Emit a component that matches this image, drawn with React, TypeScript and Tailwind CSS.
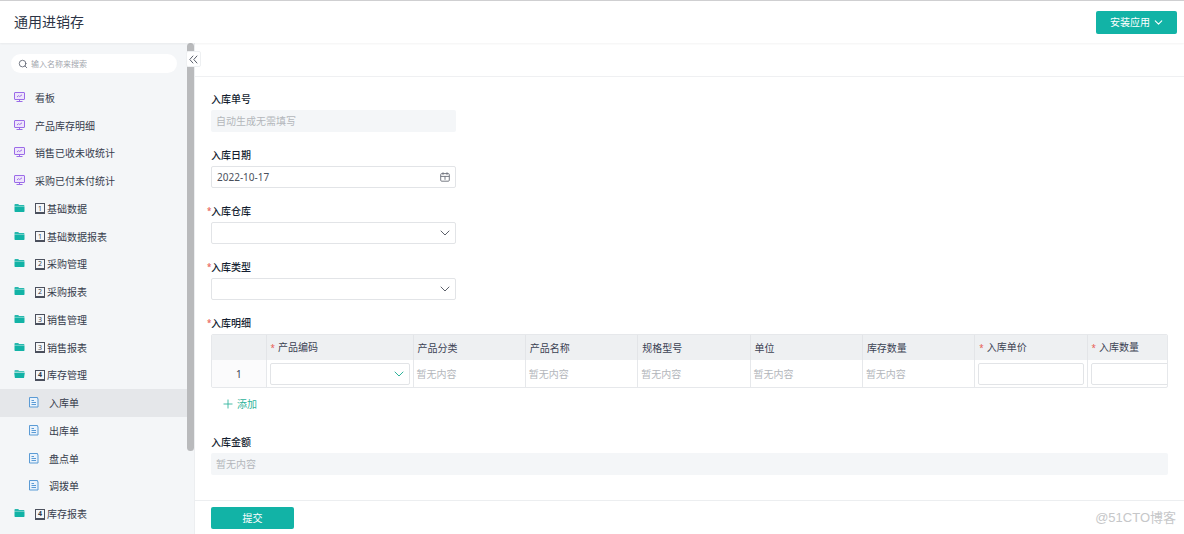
import { ChevronDown, Plus, Search } from "lucide-react";

type MenuItem = {
  label: string;
  kind: "board" | "folder" | "folderOpen" | "form";
  index?: number;
  active?: boolean;
};

const menu: MenuItem[] = [
  { label: "看板", kind: "board" },
  { label: "产品库存明细", kind: "board" },
  { label: "销售已收未收统计", kind: "board" },
  { label: "采购已付未付统计", kind: "board" },
  { label: "基础数据", kind: "folder", index: 1 },
  { label: "基础数据报表", kind: "folder", index: 1 },
  { label: "采购管理", kind: "folder", index: 2 },
  { label: "采购报表", kind: "folder", index: 2 },
  { label: "销售管理", kind: "folder", index: 3 },
  { label: "销售报表", kind: "folder", index: 3 },
  { label: "库存管理", kind: "folderOpen", index: 4 },
  { label: "入库单", kind: "form", active: true },
  { label: "出库单", kind: "form" },
  { label: "盘点单", kind: "form" },
  { label: "调拨单", kind: "form" },
  { label: "库存报表", kind: "folder", index: 4 },
];

const columns = [
  { title: "产品编码", required: true, type: "select" },
  { title: "产品分类", type: "text" },
  { title: "产品名称", type: "text" },
  { title: "规格型号", type: "text" },
  { title: "单位", type: "text" },
  { title: "库存数量", type: "text" },
  { title: "入库单价", required: true, type: "input" },
  { title: "入库数量", required: true, type: "input" },
];

function BoardIcon() {
  return (
    <svg width="11" height="11" viewBox="0 0 11 11" fill="none" stroke="#9b6be8">
      <rect x="0.5" y="0.5" width="10" height="7" rx="0.5" fill="#eee5fb" />
      <path d="M3 5l1.5-1.3 1.2.8L8 2.8" />
      <path d="M5.5 7.5v1.5M2.5 9.5h6" />
    </svg>
  );
}

function FolderIcon({ open }: { open?: boolean }) {
  return (
    <svg width="11" height="11" viewBox="0 0 11 11" fill="#12b3a6">
      <path d="M0.5 1.7q0-.7.7-.7h3l.9 1h4.6q.7 0 .7.7v.6H.5z" opacity={open ? 0.75 : 0.9} />
      <path d={open ? "M0.2 3.8h10.6l-.7 4.6q-.1.6-.7.6H1.5q-.6 0-.7-.6z" : "M0.5 3.6h10v4.7q0 .7-.7.7H1.2q-.7 0-.7-.7z"} />
    </svg>
  );
}

function FormIcon() {
  return (
    <svg width="10" height="11" viewBox="0 0 10 11" fill="none" stroke="#5b9bd5">
      <path d="M0.5 0.5h8v1h.5v8.5H.5z" fill="#eaf3fc" />
      <path d="M2.5 3.5h2.5M2.5 5.5h4.5M2.5 7.5h4.5" />
    </svg>
  );
}

function CalendarIcon() {
  return (
    <svg width="10" height="10" viewBox="0 0 10 10" fill="none" stroke="#686c76" strokeWidth="0.9">
      <rect x="0.7" y="1.6" width="8.6" height="7.6" rx="1" />
      <path d="M0.7 4.4h8.6M3 .3v2.5M7 .3v2.5M5 4.4v3.4" />
    </svg>
  );
}

function MenuIcon({ kind }: { kind: MenuItem["kind"] }) {
  if (kind === "board") return <BoardIcon />;
  if (kind === "form") return <FormIcon />;
  return <FolderIcon open={kind === "folderOpen"} />;
}

function Keycap({ value }: { value: number }) {
  return (
    <span
      className={`mr-0.5 flex h-[11px] w-[10px] items-center justify-center border border-b-2 border-[#4b505d] text-[7px] leading-none ${
        value === 4 ? "font-bold" : ""
      }`}
    >
      {value}
    </span>
  );
}

const labelClass = "relative mb-1 block leading-[14px] font-medium text-[#141e31]";

function Star() {
  return <span className="absolute -left-1 text-[8px] text-[#e8584f]">*</span>;
}

function Label({ id, text, required }: { id: string; text: string; required?: boolean }) {
  return (
    <label htmlFor={id} className={labelClass}>
      {required && <Star />}
      {text}
    </label>
  );
}

function SelectField({ id, text }: { id: string; text: string }) {
  return (
    <div>
      <Label id={id} text={text} required />
      <div className="relative w-[245px]">
        <select id={id} className="block h-[22px] w-full appearance-none rounded-xs border border-[#e2e4e7] bg-white px-1.5 outline-none" />
        <ChevronDown size={16} strokeWidth={1.5} className="pointer-events-none absolute top-[3px] right-[3px] text-[#5d616b]" />
      </div>
    </div>
  );
}

function Sidebar() {
  return (
    <aside className="relative flex w-[194px] shrink-0 bg-[#f4f6f8]">
      <div className="flex flex-1 flex-col pt-[11px] pb-1.5">
        <div className="mr-[10px] mb-[11px] ml-[11px] flex h-[19px] items-center gap-[3px] rounded-full bg-white px-[7px]">
          <Search size={10} className="shrink-0 text-[#5c6270]" />
          <input
            aria-label="输入名称来搜索"
            placeholder="输入名称来搜索"
            className="w-full bg-transparent text-[8px] leading-3 outline-none placeholder:text-[#a3a7ae]"
          />
        </div>
        <nav className="flex flex-1 flex-col">
          {menu.map((item) => (
            <a
              key={item.label}
              href="#"
              className={`flex min-h-6 flex-1 items-center gap-[10px] text-[#363c4c] ${
                item.active ? "bg-[#e5e7ea]" : ""
              } ${item.kind === "form" ? "pl-[29px]" : "pl-[14px]"}`}
            >
              <span className="pb-px">
                <MenuIcon kind={item.kind} />
              </span>
              <span className="flex items-center">
                {item.index && <Keycap value={item.index} />}
                {item.label}
              </span>
            </a>
          ))}
        </nav>
      </div>

      {/* scrollbar */}
      <div className="w-[7px]">
        <div className="h-[83%] rounded-full bg-[#b9babc]" />
      </div>

      <button
        aria-label="收起"
        className="absolute top-2 -right-[7px] flex h-4 w-[15px] items-center justify-center rounded-xs border border-[#eef0f2] bg-white"
      >
        <svg width="9" height="9" viewBox="0 0 9 9" fill="none" stroke="#5a5f6a">
          <path d="M4.2 .7L.8 4.5l3.4 3.8M8.2 .7L4.8 4.5l3.4 3.8" />
        </svg>
      </button>
    </aside>
  );
}

function DetailTable() {
  return (
    <div className="overflow-hidden rounded-xs border border-[#e6e8eb]">
      <table aria-labelledby="detail-label" className="w-[988px] table-fixed border-collapse text-left">
        <thead>
          <tr className="h-[25px] bg-[#eef0f2] text-[#3b4252]">
            <th className="w-[54px] border-r border-[#e3e5e8]" />
            {columns.map((col) => (
              <th
                key={col.title}
                className={`border-r border-[#e3e5e8] px-1 font-normal ${col.type === "select" ? "w-[147px]" : ""}`}
              >
                {col.required && <span className="mr-[3px] text-[8px] text-[#e8584f]">*</span>}
                {col.title}
              </th>
            ))}
          </tr>
        </thead>
        <tbody>
          <tr className="h-[27px]">
            <td className="border-r border-[#e6e8eb] bg-[#fbfbfc] text-center text-[#3b4252]">1</td>
            {columns.map((col) => (
              <td key={col.title} className="border-r border-[#e6e8eb] px-[3px] text-[#b3b6bb]">
                {col.type === "text" && "暂无内容"}
                {col.type === "input" && (
                  <input aria-label={col.title} className="block h-[22px] w-full rounded-xs border border-[#e2e4e7] px-1 outline-none" />
                )}
                {col.type === "select" && (
                  <div className="relative">
                    <select aria-label={col.title} className="block h-[22px] w-full appearance-none rounded-xs border border-[#e2e4e7] bg-white outline-none" />
                    <ChevronDown size={16} strokeWidth={1.5} className="pointer-events-none absolute top-[3px] right-[3px] text-[#2eb39b]" />
                  </div>
                )}
              </td>
            ))}
          </tr>
        </tbody>
      </table>
    </div>
  );
}

export default function App() {
  return (
    <div className="flex min-h-screen flex-col bg-white font-['Noto_Sans','Noto_Sans_CJK_SC',sans-serif] text-[10px] leading-[14px] text-[#363c4c]">
      <header className="z-10 flex h-[43px] shrink-0 items-center justify-between border-t border-[#cfcfd1] bg-white pr-[7px] pl-[14px] shadow-xs">
        <h1 className="text-[14px] leading-5 text-[#2c3345]">通用进销存</h1>
        <button className="flex h-[23px] items-center gap-0.5 rounded-xs bg-[#12b3a6] pr-3 pl-[14px] text-white">
          安装应用
          <ChevronDown size={13} />
        </button>
      </header>

      <div className="flex flex-1">
        <Sidebar />

        <main className="flex min-w-0 flex-1 flex-col border-l border-[#eceef0]">
          <div className="h-[34px] border-b border-[#eff0f2]" />

          <form className="flex flex-1 flex-col">
            <div className="flex flex-1 flex-col gap-4 px-4 pt-[15px] pb-6">
              <div>
                <Label id="order-no" text="入库单号" />
                <input
                  id="order-no"
                  disabled
                  placeholder="自动生成无需填写"
                  className="block h-[22px] w-[245px] rounded-xs bg-[#f4f6f8] px-[5px] placeholder:text-[#b3b6bb]"
                />
              </div>
              <div>
                <Label id="order-date" text="入库日期" />
                <div className="flex h-[22px] w-[245px] items-center rounded-xs border border-[#e2e4e7] px-[5px]">
                  <input id="order-date" defaultValue="2022-10-17" className="min-w-0 flex-1 text-[#4a4f5b] outline-none" />
                  <CalendarIcon />
                </div>
              </div>
              <SelectField id="warehouse" text="入库仓库" />
              <SelectField id="order-type" text="入库类型" />
              <div>
                <p id="detail-label" className={labelClass}>
                  <Star />
                  入库明细
                </p>
                <DetailTable />
                <button type="button" className="mt-[9px] ml-[10px] flex items-center gap-0.5 text-[#2eb39b]">
                  <Plus size={14} strokeWidth={1.5} />
                  添加
                </button>
              </div>
              <div className="pt-2">
                <Label id="amount" text="入库金额" />
                <input
                  id="amount"
                  disabled
                  placeholder="暂无内容"
                  className="block h-[22px] w-full rounded-xs bg-[#f4f6f8] px-[5px] placeholder:text-[#b3b6bb]"
                />
              </div>
            </div>

            <footer className="flex h-[34px] items-center justify-between border-t border-[#eceef0] pr-2 pl-4">
              <button type="button" className="h-[22px] w-[83px] rounded-xs bg-[#12b3a6] text-white">
                提交
              </button>
              <span className="font-['Liberation_Sans','Noto_Sans_CJK_SC',sans-serif] text-[13px] leading-5 text-[#c6c7c9]">
                @51CTO博客
              </span>
            </footer>
          </form>
        </main>
      </div>
    </div>
  );
}
